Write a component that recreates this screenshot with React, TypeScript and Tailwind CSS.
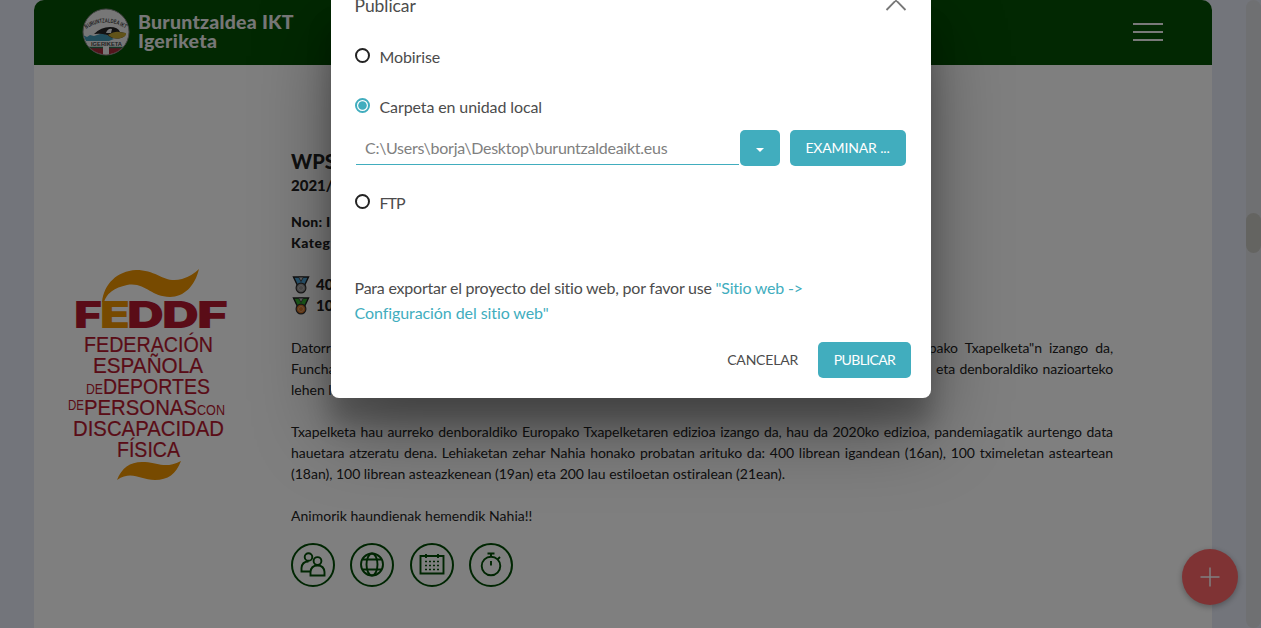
import React from "react";

function ClubCrest() {
  return (
    <svg viewBox="0 0 48 48" className="h-12 w-12 shrink-0">
      <defs>
        <clipPath id="crest">
          <circle cx="24" cy="24" r="22.5" />
        </clipPath>
        <path id="crest-arc" d="M4 21 Q24 8 44 21" />
      </defs>
      <circle cx="24" cy="24" r="23" fill="#efefef" stroke="#858585" />
      <g clipPath="url(#crest)">
        <path d="M1 27 L5 29 L8 27 L12 28 Q18 26 21 25 L32 31 L27 33 H4z" fill="#4299b5" />
        <path d="M12 26 Q19 19 28 19 Q36 19 38 24 L43 25 Q45 28 39 30 Q31 32 25 27 Q19 25 12 26z" fill="#252525" />
        <path d="M26 27 Q33 23 37 24 L44 25 Q45 28 39 30 Q32 32 26 27z" fill="#c2a632" />
        <path d="M24 25 Q26 20 30 21 L29 25z" fill="#eee" />
        <rect x="0" y="39.500" width="48" height="9" fill="#a42b38" />
        <rect x="21" y="38" width="6" height="10" fill="#f2f2f2" />
        <path d="M0 39.500 H21 M27 39.500 H48" stroke="#28714f" strokeWidth="1.500" />
      </g>
      <text fontSize="6" fontWeight="700" fill="#444" fontFamily="Liberation Sans, sans-serif">
        <textPath href="#crest-arc" textLength="42" lengthAdjust="spacingAndGlyphs">BURUNTZALDEA IKT</textPath>
      </text>
      <text x="9" y="37.500" fontSize="4.500" fontWeight="700" fill="#444" textLength="31" lengthAdjust="spacingAndGlyphs" fontFamily="Liberation Sans, sans-serif">IGERIKETA</text>
    </svg>
  );
}

function FederationLogo() {
  return (
    <svg viewBox="0 0 166 216" className="h-[216px] w-[166px] shrink-0" fontFamily="Liberation Sans, sans-serif" fill="#b5182f">
      <g fontFamily="Inter, sans-serif" fontWeight="900" fontSize="37">
        <text x="8" y="61" textLength="28" lengthAdjust="spacingAndGlyphs">F</text>
        <text x="34" y="61" textLength="30" lengthAdjust="spacingAndGlyphs" fill="#ef9400">E</text>
        <text x="61" y="61" textLength="37" lengthAdjust="spacingAndGlyphs">D</text>
        <text x="96" y="61" textLength="37" lengthAdjust="spacingAndGlyphs">D</text>
        <text x="131" y="61" textLength="31" lengthAdjust="spacingAndGlyphs">F</text>
      </g>
      <path d="M36 35 C38 17 51 4 70 3 C92 3 98 17 116 12 Q126 9 133 2 C129 19 118 30 104 30 C84 30 80 15 61 18 Q42 22 38 35z" fill="#ef9400" />
      <g fontSize="21.500" stroke="#b5182f" strokeWidth=".2">
        <text x="18" y="85.300" textLength="129" lengthAdjust="spacingAndGlyphs">FEDERACIÓN</text>
        <text x="27" y="106.300" textLength="110" lengthAdjust="spacingAndGlyphs">ESPAÑOLA</text>
        <text x="20" y="126.500" fontSize="14.500" strokeWidth="0" textLength="17" lengthAdjust="spacingAndGlyphs">DE</text>
        <text x="37" y="126.500" textLength="107" lengthAdjust="spacingAndGlyphs">DEPORTES</text>
        <text x="2" y="143" fontSize="14.500" strokeWidth="0" textLength="16" lengthAdjust="spacingAndGlyphs">DE</text>
        <text x="18" y="148" textLength="113" lengthAdjust="spacingAndGlyphs">PERSONAS</text>
        <text x="131" y="148" fontSize="15.500" strokeWidth="0" textLength="28" lengthAdjust="spacingAndGlyphs">CON</text>
        <text x="7" y="169" textLength="151" lengthAdjust="spacingAndGlyphs">DISCAPACIDAD</text>
        <text x="51" y="190" textLength="63" lengthAdjust="spacingAndGlyphs">FÍSICA</text>
      </g>
      <path d="M51 213 C56 200 65 194 79 195 C93 196 99 202 115 194 C110 207 102 213 89 213 C74 213 66 203 51 213z" fill="#ef9400" />
    </svg>
  );
}

function Medal({ ribbon, disc }: { ribbon: string; disc: string }) {
  return (
    <svg viewBox="0 0 18 18" className="h-[18px] w-[18px] shrink-0">
      <path d="M1.500 1 H16.500 L12.500 9.500 H5.500z" fill={ribbon} stroke="#222" strokeWidth="1.400" />
      <path d="M6.500 1 L9 5.500 L11.500 1z" fill="#c0c0c0" stroke="#333" strokeWidth=".8" />
      <circle cx="9" cy="12" r="4.900" fill={disc} stroke="#333" strokeWidth="1.200" />
      <circle cx="9" cy="12" r="2.500" fill="none" stroke="#fff" strokeOpacity=".35" />
    </svg>
  );
}

function RoundIcon({ children }: { children: React.ReactNode }) {
  return (
    <svg viewBox="0 0 44 44" className="h-11 w-11" fill="none" stroke="#004c05" strokeWidth="1.900">
      <circle cx="22" cy="22" r="21" strokeWidth="2" />
      {children}
    </svg>
  );
}

function Radio({ label, checked = false }: { label: string; checked?: boolean }) {
  return (
    <div className="flex h-[25px] items-center gap-[9px]">
      <svg viewBox="0 0 16 16" className="-mt-[3px] h-4 w-4" fill="none">
        <circle cx="7.500" cy="7.500" r="6.500" stroke={checked ? "#41adbe" : "#232323"} strokeWidth="2" />
        {checked && <circle cx="7.500" cy="7.500" r="4.300" fill="#41adbe" />}
      </svg>
      <span className="-mt-[2px]">{label}</span>
    </div>
  );
}

function SitePage() {
  return (
    <div className="flex h-full w-[1178px] shrink-0 flex-col overflow-hidden rounded-t-[10px] bg-white">
      <header className="flex h-[65px] shrink-0 items-center justify-between bg-[#045004] pr-[49px] pb-[2px] pl-12">
        <div className="flex items-center gap-2">
          <ClubCrest />
          <div className="-mt-px text-[19.500px] leading-[19px] font-black text-[#eee]">
            <div className="tracking-[0.25px]">Buruntzaldea IKT</div>
            <div className="tracking-[0.3px]">Igeriketa</div>
          </div>
        </div>
        <div className="flex w-[30px] flex-col gap-1.5">
          <div className="h-[2px] bg-[#f3f3f3]" />
          <div className="h-[2px] bg-[#f3f3f3]" />
          <div className="h-[2px] bg-[#f3f3f3]" />
        </div>
      </header>
      <div className="flex pl-[32px]">
        <div className="w-[225px] shrink-0 pt-[202px]">
          <FederationLogo />
        </div>
        <div className="w-[822px] pt-[82px] text-[14px] leading-[21px] text-[#232323]">
          <h1 className="h-[28px] text-[20px] leading-[28px] font-black">WPS</h1>
          <div className="text-[15px] font-black">2021/</div>
          <div className="mt-[15px] font-black tracking-[0.3px]">Non: I</div>
          <div className="font-black tracking-[0.5px]">Kateg</div>
          <div className="mt-[21px] flex items-center gap-[6px] pl-px font-black">
            <Medal ribbon="#50a8dc" disc="#9c9c9c" />
            <span className="text-[15px]">40</span>
          </div>
          <div className="flex items-center gap-[6px] pl-px font-black">
            <Medal ribbon="#38b435" disc="#d97828" />
            <span className="text-[15px]">10</span>
          </div>
          <div className="mt-[21px] flex justify-between whitespace-nowrap">
            <span className="tracking-[-0.1px]">Datorre</span>
            <span className="w-[192px] tracking-[-0.1px] [text-align-last:justify]">opako Txapelketa"n izango da,</span>
          </div>
          <div className="flex justify-between whitespace-nowrap">
            <span>Funcha</span>
            <span className="w-[177px] tracking-[-0.1px] [text-align-last:justify]">eta denboraldiko nazioarteko</span>
          </div>
          <div>lehen l</div>
          <div className="mt-[21px]">
            <div className="tracking-[-0.06px] whitespace-nowrap [text-align-last:justify]">Txapelketa hau aurreko denboraldiko Europako Txapelketaren edizioa izango da, hau da 2020ko edizioa, pandemiagatik aurtengo data</div>
            <div className="tracking-[-0.04px] whitespace-nowrap [text-align-last:justify]">hauetara atzeratu dena. Lehiaketan zehar Nahia honako probatan arituko da: 400 librean igandean (16an), 100 tximeletan asteartean</div>
            <div className="tracking-[-0.01px]">(18an), 100 librean asteazkenean (19an) eta 200 lau estiloetan ostiralean (21ean).</div>
          </div>
          <div className="mt-[21px] tracking-[0.02px]">Animorik haundienak hemendik Nahia!!</div>
          <div className="mt-[17px] flex gap-[15.400px]">
            <RoundIcon>
              <circle cx="17.500" cy="14" r="3.800" />
              <path d="M19 28.500 H10.500 V25 Q11 18.500 17.500 18.500" />
              <circle cx="26.500" cy="18" r="3.900" fill="white" />
              <path d="M19.500 32.500 V29 Q20 22.500 26.500 22.500 Q33 22.500 33.500 29 V32.500z" fill="white" />
            </RoundIcon>
            <RoundIcon>
              <circle cx="22" cy="21.500" r="11" />
              <ellipse cx="22" cy="21.500" rx="5.500" ry="11" />
              <path d="M13 16.500 H31 M13 26.500 H31" />
            </RoundIcon>
            <RoundIcon>
              <path d="M10.500 13 H33.500 V30.500 H10.500z M16 11 V15 M28 11 V15" />
              <path d="M15 18.500 H30 M15 22.500 H30 M15 26.500 H30" strokeDasharray="2 2" strokeWidth="1.600" />
            </RoundIcon>
            <RoundIcon>
              <circle cx="22" cy="23" r="9.300" />
              <path d="M18.500 10.500 H25.500 M22 10.500 V14 M22 18 V22.500 M28.500 16.500 L31 14" />
            </RoundIcon>
          </div>
        </div>
      </div>
    </div>
  );
}

function PublishDialog() {
  return (
    <div className="absolute top-0 left-[331px] flex h-[398px] w-[600px] flex-col rounded-b-[8px] bg-white pr-5 pl-[23.500px] text-[16px] leading-[25px] tracking-[-0.11px] text-[#4c4c4c] shadow-[0_27px_24px_rgba(0,0,0,0.2),0_30px_77px_rgba(0,0,0,0.4)] [font-variant-ligatures:none]">
      <div className="-mt-[7px] flex h-[25px] items-start justify-between">
        <span className="text-[17.500px] tracking-[-0.05px]">Publicar</span>
        <svg viewBox="0 0 22 22" className="-mt-1 mr-[4.500px] h-[22px] w-[22px] shrink-0" stroke="#777" strokeWidth="1.800">
          <path d="M1.500 1.500 L20.500 21 M20.500 1.500 L1.500 21" />
        </svg>
      </div>
      <div className="mt-[27px]"><Radio label="Mobirise" /></div>
      <div className="mt-[25px]"><Radio label="Carpeta en unidad local" checked /></div>
      <div className="mt-[10px] flex h-9">
        <div className="ml-[1.500px] h-[35px] w-[383px] border-b border-[#41adbe] pt-[5px] pl-[9px] tracking-[-0.26px] text-[#808080]">C:\Users\borja\Desktop\buruntzaldeaikt.eus</div>
        <button className="ml-px flex h-9 w-10 items-center justify-center rounded-[5px] bg-[#41adbe]">
          <svg viewBox="0 0 8 4" className="mt-[3px] h-1 w-2" fill="#fff"><path d="M0 0 H8 L4 4z" /></svg>
        </button>
        <button className="ml-[10px] h-9 w-[116px] rounded-[5px] bg-[#41adbe] pr-px pb-px text-[14px] tracking-[-0.15px] whitespace-nowrap text-white">EXAMINAR ...</button>
      </div>
      <div className="mt-[25px] tracking-[-1px]"><Radio label="FTP" /></div>
      <p className="mt-[59px] w-[470px] tracking-[-0.22px]">
        Para exportar el proyecto del sitio web, por favor use <span className="text-[#41adbe]">"Sitio web -&gt;<br /><span className="tracking-[-0.08px]">Configuración del sitio web"</span></span>
      </p>
      <div className="mt-[17px] flex items-center justify-end gap-5 text-[14px]">
        <button className="-mt-px tracking-[-0.2px]">CANCELAR</button>
        <button className="h-9 w-[93px] rounded-[5px] bg-[#41adbe] pb-px tracking-[-0.65px] text-white">PUBLICAR</button>
      </div>
    </div>
  );
}

export default function App() {
  return (
    <div className="relative flex h-[628px] w-[1261px] overflow-hidden bg-[#e7ebf7] pl-[34px] font-[Lato,sans-serif]">
      <SitePage />
      <div className="ml-auto w-[15px] rounded-full bg-[#dfe1e5] pt-[213px]">
        <div className="h-10 rounded-full bg-[#c8c8c3]" />
      </div>
      <button className="absolute top-[549px] left-[1182px] flex h-14 w-14 items-center justify-center rounded-full bg-[#ff6669] shadow-[0_2px_6px_rgba(0,0,0,0.3)]">
        <svg viewBox="0 0 20 20" className="h-5 w-5" stroke="#fff" strokeWidth="1.500"><path d="M10 .5 V19.500 M.5 10 H19.500" /></svg>
      </button>
      <div className="absolute inset-0 bg-black/50" />
      <PublishDialog />
    </div>
  );
}
